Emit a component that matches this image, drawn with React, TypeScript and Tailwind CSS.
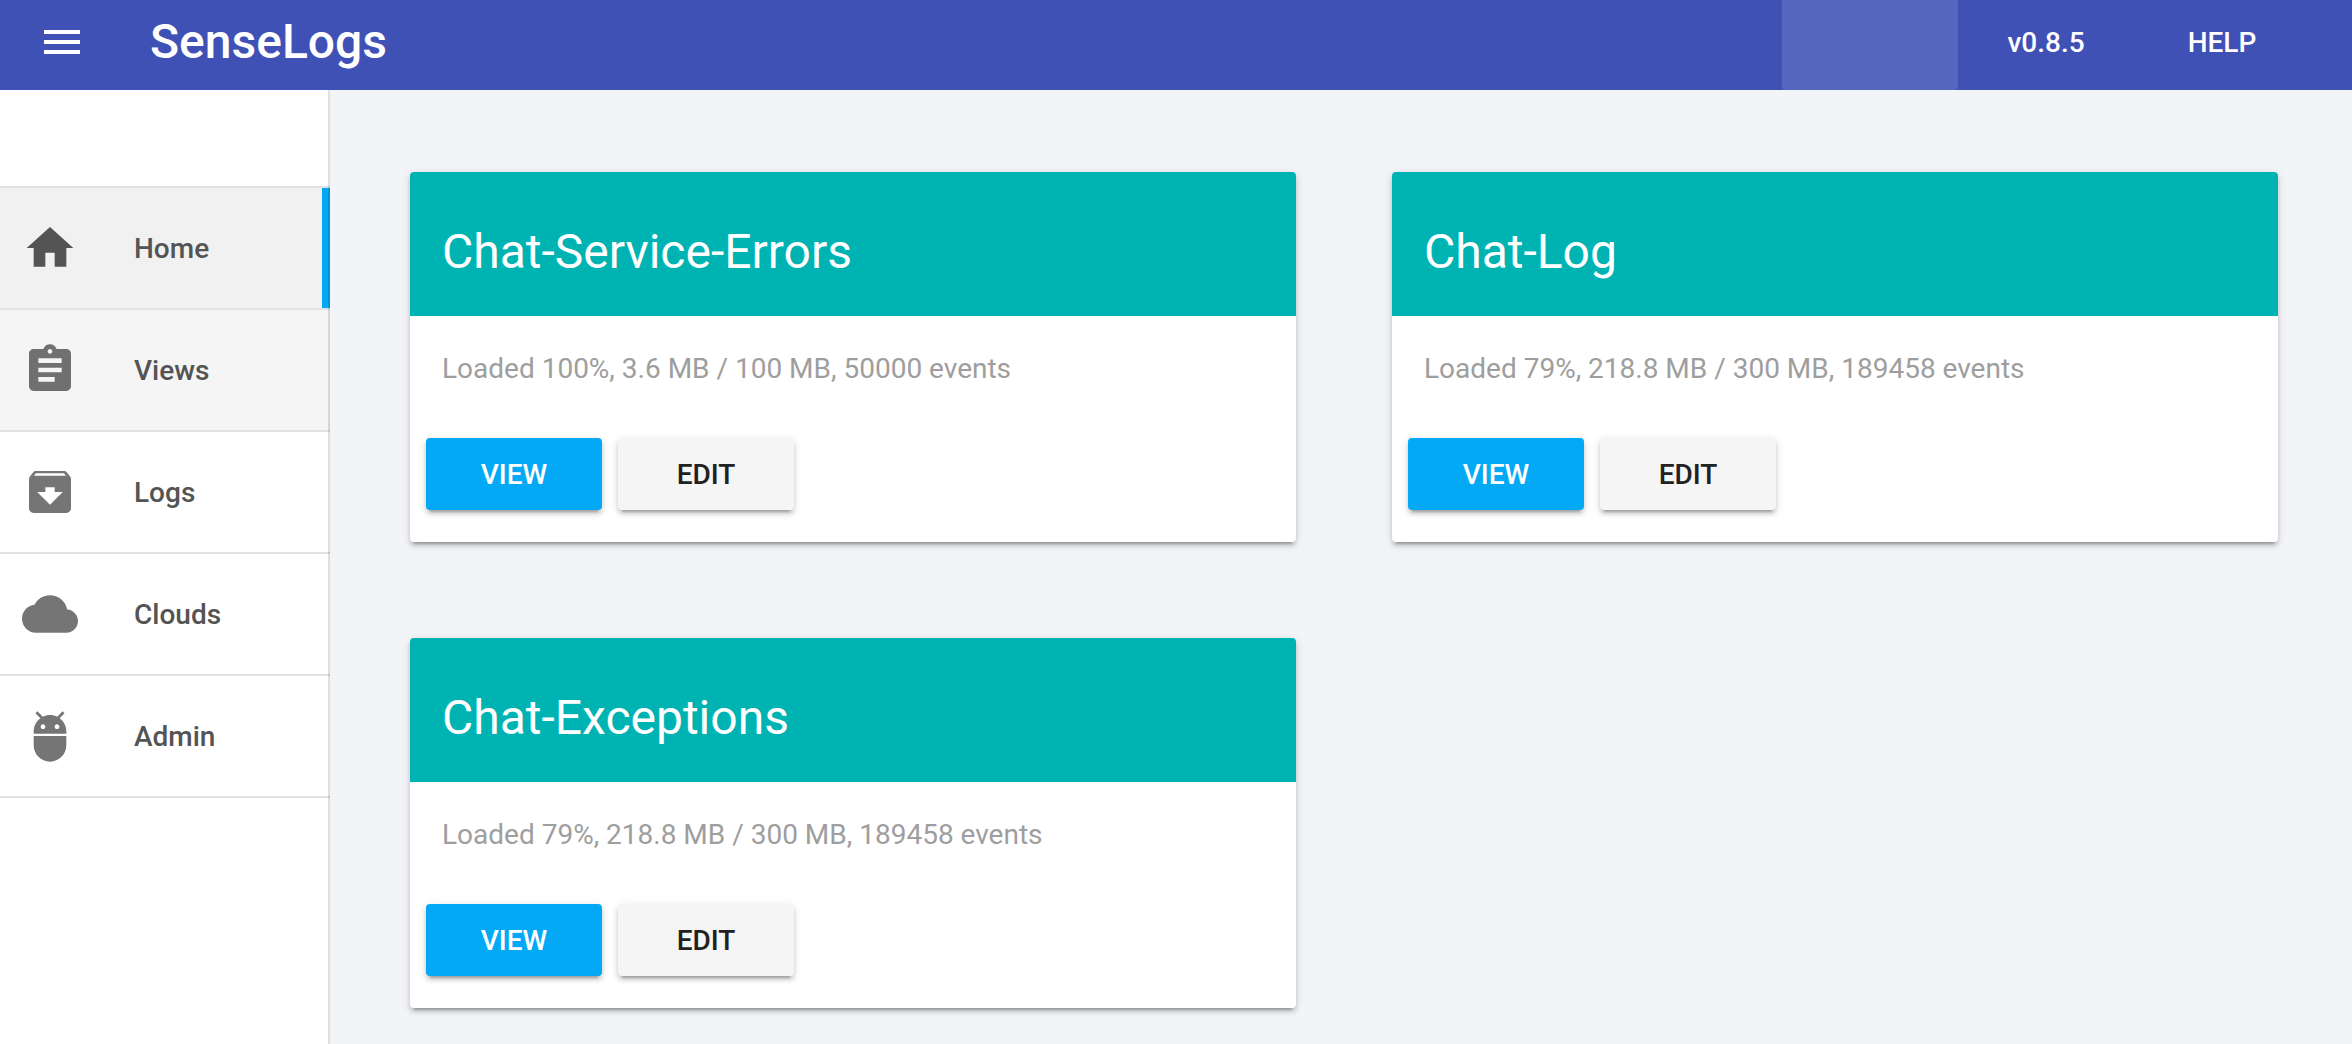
import type { IconType } from "react-icons";
import { MdAdb, MdArchive, MdAssignment, MdCloud, MdHome, MdMenu } from "react-icons/md";

type NavItem = { label: string; href: string; icon: IconType; state?: "active" | "hover" };

const navItems: NavItem[] = [
  { label: "Home", href: "#home", icon: MdHome, state: "active" },
  { label: "Views", href: "#views", icon: MdAssignment, state: "hover" },
  { label: "Logs", href: "#logs", icon: MdArchive },
  { label: "Clouds", href: "#clouds", icon: MdCloud },
  { label: "Admin", href: "#admin", icon: MdAdb },
];

const logCards = [
  { title: "Chat-Service-Errors", status: "Loaded 100%, 3.6 MB / 100 MB, 50000 events" },
  { title: "Chat-Log", status: "Loaded 79%, 218.8 MB / 300 MB, 189458 events" },
  { title: "Chat-Exceptions", status: "Loaded 79%, 218.8 MB / 300 MB, 189458 events" },
];

const raised =
  "shadow-[0_4px_4px_0_rgba(0,0,0,0.14),0_6px_2px_-4px_rgba(0,0,0,0.2),0_2px_10px_0_rgba(0,0,0,0.12)]";

function Header() {
  return (
    <header className="flex h-[90px] items-stretch bg-[#3f51b5] pr-[42px] text-white">
      <div className="flex flex-1 items-center pb-1.5 pl-[38px]">
        <button type="button" aria-label="Toggle menu" className="mr-16">
          <MdMenu className="size-12" />
        </button>
        <h1 className="text-[48px] leading-[64px] font-medium">SenseLogs</h1>
      </div>
      <button type="button" aria-label="Account" className="w-44 rounded-b bg-white/12" />
      <button type="button" className="w-44 pb-1 text-[28px] font-medium">
        v0.8.5
      </button>
      <button type="button" className="w-44 pb-1 text-[28px] font-medium">
        HELP
      </button>
    </header>
  );
}

function Sidebar() {
  return (
    <nav className="relative w-[330px] shrink-0 bg-white pt-24 after:absolute after:inset-y-0 after:right-0 after:w-0.5 after:bg-black/12">
      <ul className="border-t-2 border-[#e1e1e1]">
        {navItems.map(({ label, href, icon: Icon, state }) => (
          <li key={label} className="border-b-2 border-[#e1e1e1]">
            <a
              href={href}
              aria-current={state === "active" ? "page" : undefined}
              className={`flex h-[120px] items-center pl-[22px] text-[28px] font-medium text-[#545454] ${
                state === "active"
                  ? "border-r-8 border-[#03a9f4] bg-[#f1f1f1]"
                  : state === "hover"
                    ? "bg-[#f5f5f5]"
                    : ""
              }`}
            >
              <Icon
                className={`mr-14 size-14 ${
                  state === "active" ? "text-[#545454]" : state === "hover" ? "text-[#707070]" : "text-[#757575]"
                }`}
              />
              <span className="pt-0.5">{label}</span>
            </a>
          </li>
        ))}
      </ul>
    </nav>
  );
}

function LogCard({ title, status }: { title: string; status: string }) {
  return (
    <article className={`rounded bg-white ${raised}`}>
      <h2 className="rounded-t bg-[#00b3b3] px-8 pt-12 pb-8 text-[48px] leading-[64px] text-white">{title}</h2>
      <p className="px-8 pt-8 pb-12 text-[28px] leading-[42px] text-[#9e9e9e]">{status}</p>
      <div className="flex gap-4 px-4 pb-8">
        <button type="button" className={`h-[72px] w-44 rounded bg-[#03a9f4] pt-0.5 text-[28px] font-medium text-white ${raised}`}>
          VIEW
        </button>
        <button type="button" className={`h-[72px] w-44 rounded bg-[#f5f5f5] pt-0.5 text-[28px] font-medium text-[#212121] ${raised}`}>
          EDIT
        </button>
      </div>
    </article>
  );
}

export default function App() {
  return (
    <div className="flex min-h-screen flex-col bg-[#f2f4f8] font-[Roboto,sans-serif]">
      <Header />
      <div className="flex flex-1">
        <Sidebar />
        <main className="grid flex-1 grid-cols-2 content-start gap-24 pt-[82px] pr-[74px] pb-8 pl-20">
          {logCards.map((card) => (
            <LogCard key={card.title} title={card.title} status={card.status} />
          ))}
        </main>
      </div>
    </div>
  );
}
